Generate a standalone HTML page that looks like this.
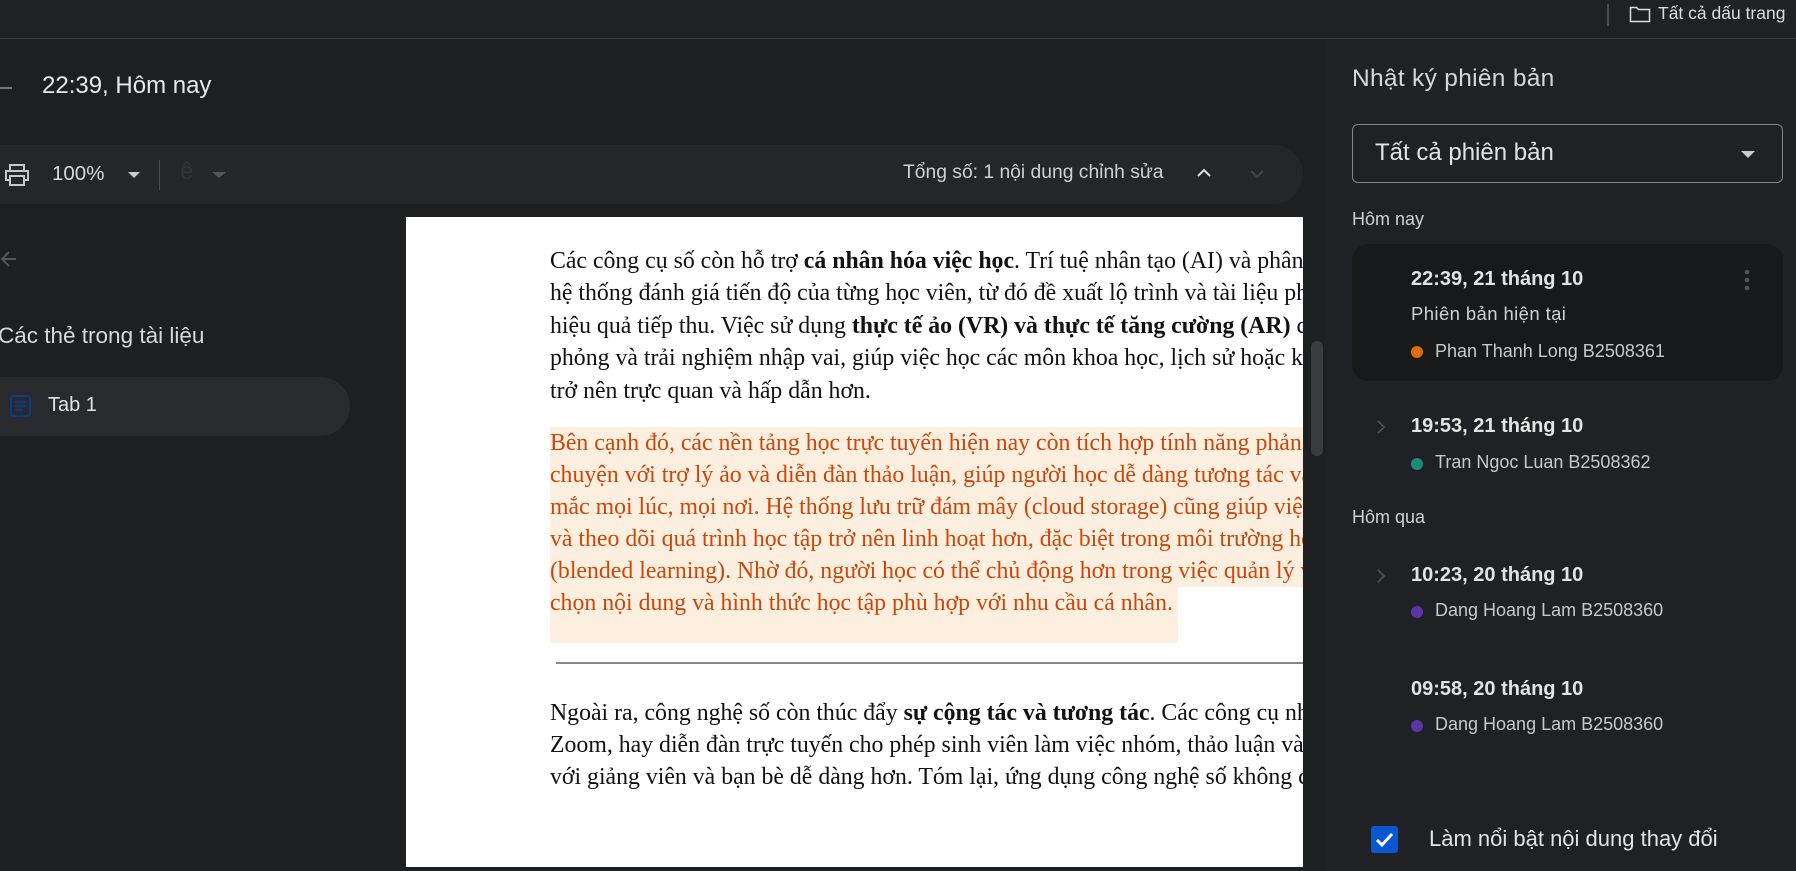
<!DOCTYPE html>
<html><head><meta charset="utf-8"><style>
*{margin:0;padding:0;box-sizing:border-box}
body{width:1796px;height:871px;overflow:hidden;background:#1e1f21;font-family:"Liberation Sans",sans-serif;color:#e3e3e3;position:relative}
.a{position:absolute;white-space:nowrap}
.top{left:0;top:0;width:1796px;height:39px;background:#202124;border-bottom:1px solid #3a3b3d}
.tb{left:-40px;top:145px;width:1343px;height:59px;background:#242628;border-radius:30px}
.page{left:406px;top:217px;width:897px;height:650px;background:#fff;overflow:hidden}
.ln{position:absolute;left:144px;white-space:nowrap;font-family:"Liberation Serif",serif;font-size:23.8px;color:#111;height:32px;line-height:32px}
.hl{color:#c9480a;background:#fdefe0;right:0}
.rp{left:1326px;top:40px;width:470px;height:831px;background:#202124}
.t{font-size:20px;font-weight:bold;color:#e3e3e3}
.n{font-size:18px;color:#c8c8c8}
.dot{position:absolute;width:12px;height:12px;border-radius:6px}
</style></head><body>
<div class="a top"></div>
<div class="a" style="left:1607px;top:4px;width:2px;height:22px;background:#4a4b4d"></div>
<svg class="a" style="left:1629px;top:5px" width="22" height="18" viewBox="0 0 22 18"><path d="M1.5 2.5h6l2 2h11v12h-19z" fill="none" stroke="#ddd" stroke-width="1.5"/></svg>
<div class="a" style="left:1658px;top:3px;font-size:17.5px;color:#ddd">Tất cả dấu trang</div>

<svg class="a" style="left:0;top:80px" width="14" height="16"><path d="M0 8h12" stroke="#777" stroke-width="2"/></svg>
<div class="a" style="left:42px;top:72px;font-size:24px;color:#e8e8e8">22:39, Hôm nay</div>

<div class="a tb"></div>
<svg class="a" style="left:4px;top:164px" width="26" height="22" viewBox="0 0 26 22"><path d="M6 6V1h14v5M6 16H2V7h22v9h-4M6 12h14v9H6z" fill="none" stroke="#c8c8c8" stroke-width="2"/></svg>
<div class="a" style="left:52px;top:162px;font-size:20.5px;color:#d8d8d8">100%</div>
<div class="a" style="left:128px;top:172px;border-left:6px solid transparent;border-right:6px solid transparent;border-top:6px solid #ccc"></div>
<div class="a" style="left:159px;top:160px;width:1px;height:30px;background:#4a4a4a"></div>
<div class="a" style="left:180px;top:158px;font-size:24px;color:#333">ê</div>
<div class="a" style="left:212px;top:172px;border-left:7px solid transparent;border-right:7px solid transparent;border-top:6px solid #555"></div>
<div class="a" style="left:903px;top:162px;font-size:19.3px;color:#d0d0d0">Tổng số: 1 nội dung chỉnh sửa</div>
<svg class="a" style="left:1196px;top:167px" width="16" height="12"><path d="M2 9l6-6 6 6" fill="none" stroke="#ddd" stroke-width="2"/></svg>
<svg class="a" style="left:1249px;top:168px" width="16" height="12"><path d="M2 3l6 6 6-6" fill="none" stroke="#444" stroke-width="2"/></svg>

<svg class="a" style="left:0;top:250px" width="18" height="18"><path d="M16 9H2M9 2L2 9l7 7" fill="none" stroke="#555" stroke-width="2"/></svg>
<div class="a" style="left:-2px;top:323px;font-size:22.5px;color:#d8d8d8">Các thẻ trong tài liệu</div>
<div class="a" style="left:-40px;top:377px;width:390px;height:59px;background:#282a2d;border-radius:30px"></div>
<svg class="a" style="left:10px;top:395px" width="21" height="22"><rect x="1" y="1" width="19" height="20" rx="2" fill="none" stroke="#0c3a86" stroke-width="2"/><path d="M5 7h11M5 11h11M5 15h8" stroke="#0c3a86" stroke-width="2"/></svg>
<div class="a" style="left:48px;top:394px;font-size:20px;color:#e3e3e3">Tab 1</div>

<div class="a page">
<div class="ln" style="top:229px;left:474px;width:9px;height:54px;background:#fdefe0"></div>
<div class="ln" style="top:28px">Các công cụ số còn hỗ trợ <b>cá nhân hóa việc học</b>. Trí tuệ nhân tạo (AI) và phân tích dữ liệu</div>
<div class="ln" style="top:60px">hệ thống đánh giá tiến độ của từng học viên, từ đó đề xuất lộ trình và tài liệu phù hợp</div>
<div class="ln" style="top:93px">hiệu quả tiếp thu. Việc sử dụng <b>thực tế ảo (VR) và thực tế tăng cường (AR)</b> cho phép</div>
<div class="ln" style="top:125px">phỏng và trải nghiệm nhập vai, giúp việc học các môn khoa học, lịch sử hoặc kỹ thuật</div>
<div class="ln" style="top:158px">trở nên trực quan và hấp dẫn hơn.</div>
<div class="ln hl" style="top:210px">Bên cạnh đó, các nền tảng học trực tuyến hiện nay còn tích hợp tính năng phản hồi</div>
<div class="ln hl" style="top:242px">chuyện với trợ lý ảo và diễn đàn thảo luận, giúp người học dễ dàng tương tác và</div>
<div class="ln hl" style="top:274px">mắc mọi lúc, mọi nơi. Hệ thống lưu trữ đám mây (cloud storage) cũng giúp việc</div>
<div class="ln hl" style="top:306px">và theo dõi quá trình học tập trở nên linh hoạt hơn, đặc biệt trong môi trường học</div>
<div class="ln hl" style="top:338px">(blended learning). Nhờ đó, người học có thể chủ động hơn trong việc quản lý việc</div>
<div class="ln hl" style="top:370px;right:auto;width:628px;height:56px">chọn nội dung và hình thức học tập phù hợp với nhu cầu cá nhân.</div>
<div class="a" style="left:150px;top:445px;width:760px;height:2px;background:#888"></div>
<div class="ln" style="top:480px">Ngoài ra, công nghệ số còn thúc đẩy <b>sự cộng tác và tương tác</b>. Các công cụ như</div>
<div class="ln" style="top:512px">Zoom, hay diễn đàn trực tuyến cho phép sinh viên làm việc nhóm, thảo luận và</div>
<div class="ln" style="top:544px">với giảng viên và bạn bè dễ dàng hơn. Tóm lại, ứng dụng công nghệ số không chỉ</div>
</div>
<div class="a" style="left:1311px;top:341px;width:12px;height:115px;background:#3a3b3d;border-radius:6px"></div>

<div class="a rp"></div>
<div class="a" style="left:1352px;top:65px;font-size:24.5px;letter-spacing:0.3px;color:#d6d6d6">Nhật ký phiên bản</div>
<div class="a" style="left:1352px;top:124px;width:431px;height:59px;border:1px solid #8b8680;border-radius:6px"></div>
<div class="a" style="left:1375px;top:139px;font-size:24px;color:#e3e3e3">Tất cả phiên bản</div>
<div class="a" style="left:1741px;top:151px;border-left:7px solid transparent;border-right:7px solid transparent;border-top:7px solid #ccc"></div>
<div class="a" style="left:1352px;top:209px;font-size:18px;color:#d0d0d0">Hôm nay</div>
<div class="a" style="left:1352px;top:244px;width:431px;height:137px;background:#18191b;border-radius:16px"></div>
<div class="a t" style="left:1411px;top:268px">22:39, 21 tháng 10</div>
<svg class="a" style="left:1743px;top:269px" width="8" height="22"><circle cx="4" cy="3" r="2.3" fill="#555"/><circle cx="4" cy="11" r="2.3" fill="#555"/><circle cx="4" cy="19" r="2.3" fill="#555"/></svg>
<div class="a" style="left:1411px;top:303px;font-size:18.5px;letter-spacing:0.4px;color:#d0d0d0">Phiên bản hiện tại</div>
<div class="dot" style="left:1411px;top:346px;background:#e06c00"></div>
<div class="a n" style="left:1435px;top:341px">Phan Thanh Long B2508361</div>

<svg class="a" style="left:1376px;top:419px" width="10" height="16"><path d="M2 2l6 6-6 6" fill="none" stroke="#555" stroke-width="1.5"/></svg>
<div class="a t" style="left:1411px;top:415px">19:53, 21 tháng 10</div>
<div class="dot" style="left:1411px;top:458px;background:#1a8a7a"></div>
<div class="a n" style="left:1435px;top:452px">Tran Ngoc Luan B2508362</div>
<div class="a" style="left:1352px;top:507px;font-size:18px;color:#d0d0d0">Hôm qua</div>
<svg class="a" style="left:1376px;top:568px" width="10" height="16"><path d="M2 2l6 6-6 6" fill="none" stroke="#555" stroke-width="1.5"/></svg>
<div class="a t" style="left:1411px;top:564px">10:23, 20 tháng 10</div>
<div class="dot" style="left:1411px;top:606px;background:#5b35a8"></div>
<div class="a n" style="left:1435px;top:600px">Dang Hoang Lam B2508360</div>
<div class="a t" style="left:1411px;top:678px">09:58, 20 tháng 10</div>
<div class="dot" style="left:1411px;top:720px;background:#5b35a8"></div>
<div class="a n" style="left:1435px;top:714px">Dang Hoang Lam B2508360</div>

<div class="a" style="left:1371px;top:826px;width:27px;height:27px;background:#0b57d0;border-radius:3px"></div>
<svg class="a" style="left:1374px;top:830px" width="21" height="19"><path d="M3 10l5 5 10-11" fill="none" stroke="#fff" stroke-width="3"/></svg>
<div class="a" style="left:1429px;top:826px;font-size:22px;color:#e3e3e3">Làm nổi bật nội dung thay đổi</div>
</body></html>
